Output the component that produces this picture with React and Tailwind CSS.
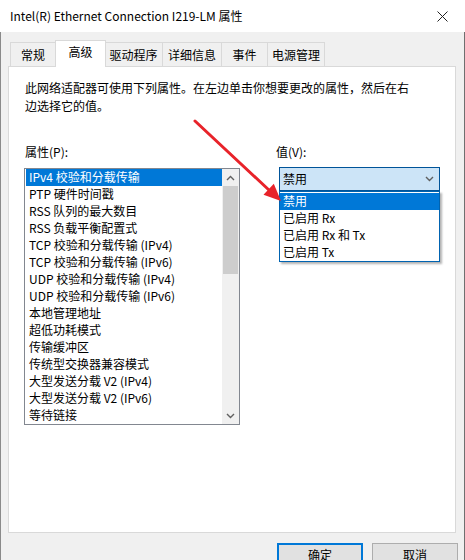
const PROPS = [
  'IPv4 校验和分载传输',
  'PTP 硬件时间戳',
  'RSS 队列的最大数目',
  'RSS 负载平衡配置式',
  'TCP 校验和分载传输 (IPv4)',
  'TCP 校验和分载传输 (IPv6)',
  'UDP 校验和分载传输 (IPv4)',
  'UDP 校验和分载传输 (IPv6)',
  '本地管理地址',
  '超低功耗模式',
  '传输缓冲区',
  '传统型交换器兼容模式',
  '大型发送分载 V2 (IPv4)',
  '大型发送分载 V2 (IPv6)',
  '等待链接',
]

const VALUES = ['禁用', '已启用 Rx', '已启用 Rx 和 Tx', '已启用 Tx']

const TABS = [
  { label: '常规', w: 'w-[46px]' },
  { label: '高级', w: 'w-[51px]', active: true },
  { label: '驱动程序', w: 'w-[59px]' },
  { label: '详细信息', w: 'w-[60px]' },
  { label: '事件', w: 'w-[47px]' },
  { label: '电源管理', w: 'w-[58px]' },
]

function Chevron({ up = false, className = '' }) {
  return (
    <svg width="9" height="6" viewBox="0 0 9 6" className={className}>
      <path
        d={up ? 'M1 5 L4.5 1.5 L8 5' : 'M1 1 L4.5 4.5 L8 1'}
        fill="none"
        stroke="#606060"
        strokeWidth="1.4"
      />
    </svg>
  )
}

export default function App() {
  return (
    <div className="relative w-[465px] h-[560px] overflow-hidden bg-[#f0f0f0] text-[12px] leading-[17px] text-black font-['Noto_Sans_CJK_SC','Noto_Sans',sans-serif]">
      {/* title bar */}
      <div className="h-[32px] bg-white flex items-center pl-[10px] pr-[12px]">
        <span className="text-[12px] leading-[16px]">Intel(R) Ethernet Connection I219-LM 属性</span>
        <svg width="11" height="11" viewBox="0 0 11 11" className="ml-auto mr-[5px]">
          <path d="M0.5 0.5 L10.5 10.5 M10.5 0.5 L0.5 10.5" stroke="#222" strokeWidth="1" />
        </svg>
      </div>

      <div className="border-l border-l-[#8a8a8a] border-r border-r-[#6f6f6f] h-[528px]">
        {/* tabs */}
        <div className="flex items-end h-[34px] pl-[9px] relative z-10">
          {TABS.map(t =>
            t.active ? (
              <div
                key={t.label}
                className={`${t.w} h-[27px] -mb-px bg-white border border-[#d9d9d9] border-b-0 flex justify-center pt-[2px] -mx-px z-10`}
              >
                {t.label}
              </div>
            ) : (
              <div
                key={t.label}
                className={`${t.w} h-[24px] bg-[#f0f0f0] border border-[#d9d9d9] border-b-0 flex justify-center pt-[3px] -ml-px first:ml-0`}
              >
                {t.label}
              </div>
            )
          )}
        </div>

        {/* panel */}
        <div className="ml-[7px] w-[448px] h-[467px] bg-white border border-[#d9d9d9] pt-[12px] px-[15px]">
          <p className="pl-[1px] leading-[18px]">
            此网络适配器可使用下列属性。在左边单击你想要更改的属性，然后在右
            <br />
            边选择它的值。
          </p>

          <div className="flex mt-[28px]">
            {/* left column */}
            <div className="w-[217px]">
              <div className="pl-[1px] leading-[18px]">属性(P):</div>
              <div className="mt-[7px] flex border border-[#828790] h-[257px]">
                <div className="flex-1 pl-[1px]">
                  {PROPS.map((p, i) => (
                    <div
                      key={p}
                      className={`h-[17px] pl-[3px] leading-[16px] whitespace-nowrap ${i === 0 ? 'bg-[#0078d7] text-white' : ''}`}
                    >
                      {p}
                    </div>
                  ))}
                </div>
                <div className="w-[17px] bg-[#f0f0f0] flex flex-col">
                  <div className="h-[17px] flex items-center justify-center">
                    <Chevron up />
                  </div>
                  <div className="h-[88px] mx-px bg-[#cdcdcd]" />
                  <div className="flex-1" />
                  <div className="h-[17px] flex items-center justify-center">
                    <Chevron />
                  </div>
                </div>
              </div>
            </div>

            {/* right column */}
            <div className="ml-[36px]">
              <div className="leading-[18px]">值(V):</div>
              <div className="relative mt-[6px] ml-[3px] w-[161px]">
                <div className="h-[24px] bg-[#cce4f7] border border-[#005499] flex items-center pl-[3px] pr-[5px] leading-[16px]">
                  <span>禁用</span>
                  <Chevron className="ml-auto" />
                </div>
                <div className="absolute left-0 top-[24px] w-[161px] h-[71px] bg-white border border-[#0063b1] pt-px shadow-[2px_2px_2px_rgba(0,0,0,0.3)] z-20">
                  {VALUES.map((v, i) => (
                    <div
                      key={v}
                      className={`h-[17px] pl-[3px] leading-[16px] whitespace-nowrap ${i === 0 ? 'bg-[#0078d7] text-white' : ''}`}
                    >
                      {v}
                    </div>
                  ))}
                </div>
              </div>
            </div>
          </div>
        </div>

        {/* buttons */}
        <div className="flex justify-end gap-[9px] pr-[6px] mt-[10px]">
          <button className="w-[86px] h-[23px] bg-[#e1e1e1] border-2 border-[#0078d7] flex items-center justify-center">
            确定
          </button>
          <button className="w-[86px] h-[23px] bg-[#e1e1e1] border border-[#adadad] flex items-center justify-center">
            取消
          </button>
        </div>
      </div>

      {/* red annotation arrow */}
      <svg className="absolute inset-0 pointer-events-none z-30" width="465" height="560">
        <line x1="195" y1="121" x2="270" y2="191" stroke="#e8232a" strokeWidth="3" strokeLinecap="round" />
        <polygon points="281,201 263.5,194.8 273.8,183.8" fill="#e8232a" />
      </svg>
    </div>
  )
}
